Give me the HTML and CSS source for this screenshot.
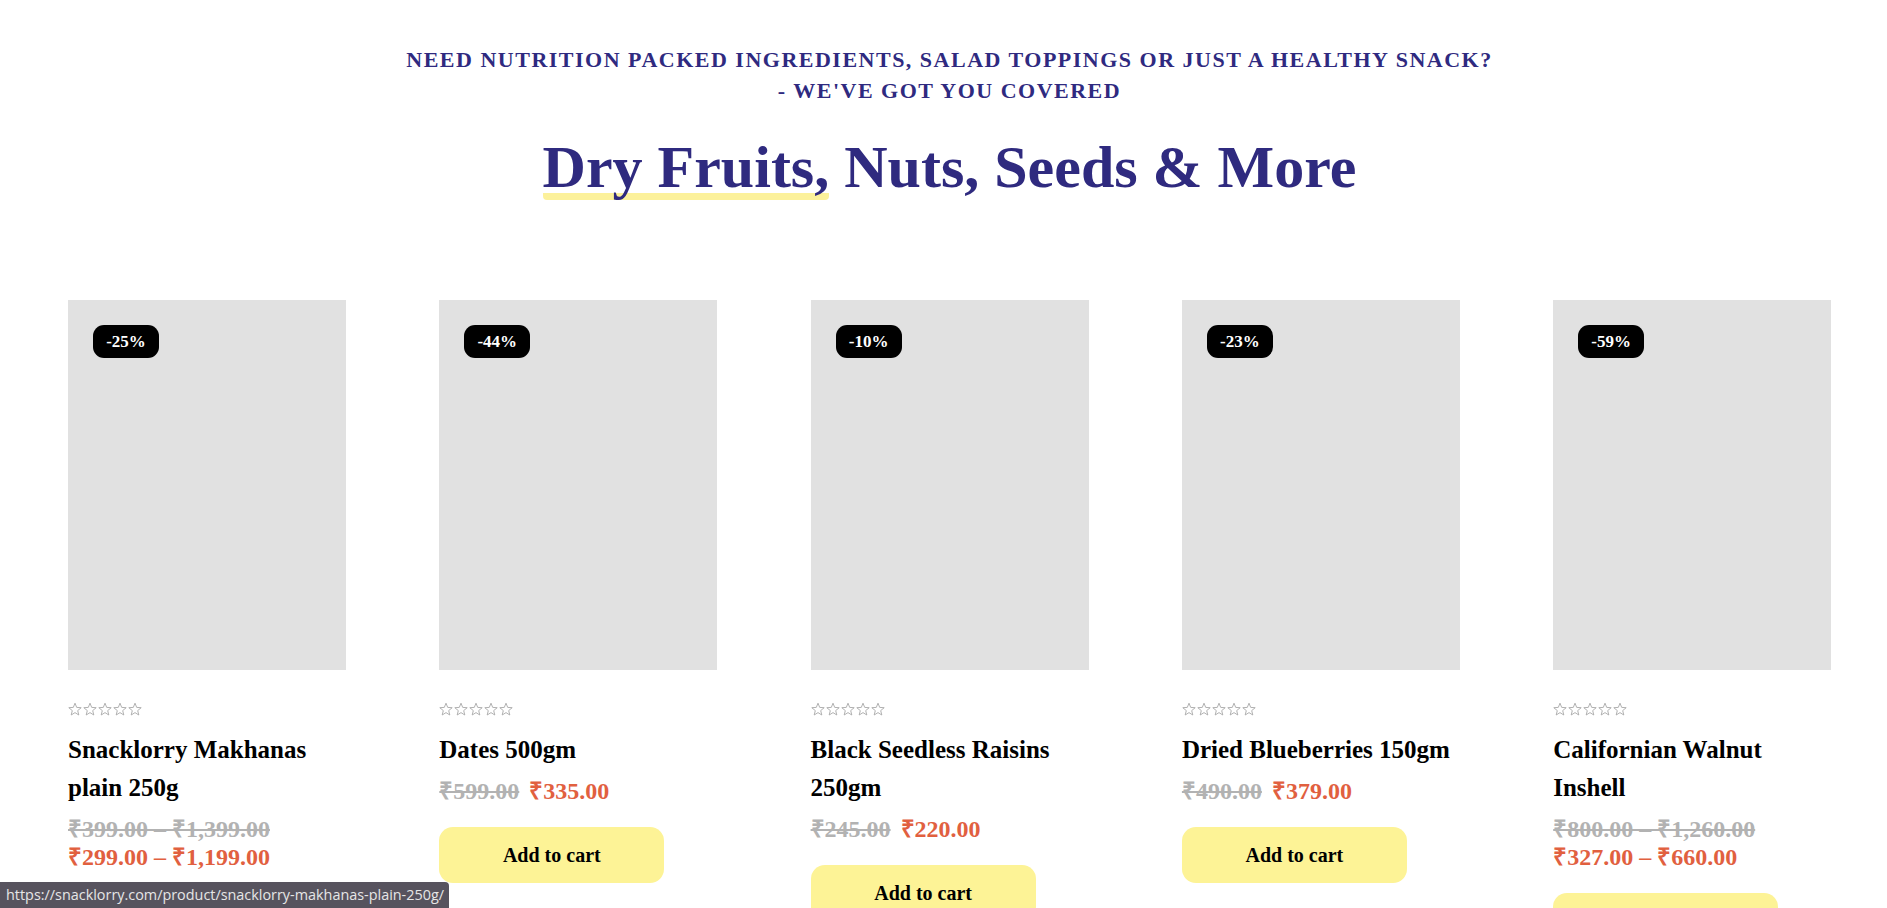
FILE: index.html
```html
<!DOCTYPE html>
<html lang="en">
<head>
<meta charset="utf-8">
<title>Dry Fruits, Nuts, Seeds &amp; More</title>
<link rel="stylesheet" href="styles.css">
</head>
<body>
<section class="intro">
  <p class="tagline">Need nutrition packed ingredients, salad toppings or just a healthy snack?<br>- We've got you covered</p>
  <h2 class="title"><span class="mark">Dry Fruits,</span> Nuts, Seeds &amp; More</h2>
</section>

<ul class="products">
  <li class="card">
    <a class="thumb" href="#"><span class="badge">-25%</span></a>
    <div class="stars">
      <svg viewBox="0 0 75 14"><g fill="none" stroke="#a8a8a8" stroke-width="0.9"><path id="s" d="M7 1.2l1.7 4.2 4.5.3-3.5 2.9 1.1 4.4L7 10.6 3.2 13l1.1-4.4L.8 5.7l4.5-.3z"/><use href="#s" x="15"/><use href="#s" x="30"/><use href="#s" x="45"/><use href="#s" x="60"/></g></svg>
    </div>
    <h3 class="name">Snacklorry Makhanas plain 250g</h3>
    <div class="price range">
      <del>₹399.00 – ₹1,399.00</del>
      <ins>₹299.00 – ₹1,199.00</ins>
    </div>
    <a class="cart" href="#">Add to cart</a>
  </li>
  <li class="card">
    <a class="thumb" href="#"><span class="badge">-44%</span></a>
    <div class="stars">
      <svg viewBox="0 0 75 14"><g fill="none" stroke="#a8a8a8" stroke-width="0.9"><use href="#s"/><use href="#s" x="15"/><use href="#s" x="30"/><use href="#s" x="45"/><use href="#s" x="60"/></g></svg>
    </div>
    <h3 class="name">Dates 500gm</h3>
    <div class="price"><del>₹599.00</del> <ins>₹335.00</ins></div>
    <a class="cart" href="#">Add to cart</a>
  </li>
  <li class="card">
    <a class="thumb" href="#"><span class="badge">-10%</span></a>
    <div class="stars">
      <svg viewBox="0 0 75 14"><g fill="none" stroke="#a8a8a8" stroke-width="0.9"><use href="#s"/><use href="#s" x="15"/><use href="#s" x="30"/><use href="#s" x="45"/><use href="#s" x="60"/></g></svg>
    </div>
    <h3 class="name">Black Seedless Raisins 250gm</h3>
    <div class="price"><del>₹245.00</del> <ins>₹220.00</ins></div>
    <a class="cart" href="#">Add to cart</a>
  </li>
  <li class="card">
    <a class="thumb" href="#"><span class="badge">-23%</span></a>
    <div class="stars">
      <svg viewBox="0 0 75 14"><g fill="none" stroke="#a8a8a8" stroke-width="0.9"><use href="#s"/><use href="#s" x="15"/><use href="#s" x="30"/><use href="#s" x="45"/><use href="#s" x="60"/></g></svg>
    </div>
    <h3 class="name">Dried Blueberries 150gm</h3>
    <div class="price"><del>₹490.00</del> <ins>₹379.00</ins></div>
    <a class="cart" href="#">Add to cart</a>
  </li>
  <li class="card">
    <a class="thumb" href="#"><span class="badge">-59%</span></a>
    <div class="stars">
      <svg viewBox="0 0 75 14"><g fill="none" stroke="#a8a8a8" stroke-width="0.9"><use href="#s"/><use href="#s" x="15"/><use href="#s" x="30"/><use href="#s" x="45"/><use href="#s" x="60"/></g></svg>
    </div>
    <h3 class="name">Californian Walnut Inshell</h3>
    <div class="price range">
      <del>₹800.00 – ₹1,260.00</del>
      <ins>₹327.00 – ₹660.00</ins>
    </div>
    <a class="cart" href="#">Add to cart</a>
  </li>
</ul>

<div class="status">https://snacklorry.com/product/snacklorry-makhanas-plain-250g/</div>
</body>
</html>
```

FILE: styles.css
```css
html {
  overflow: hidden;
}

body {
  margin: 0;
  background: #ffffff;
  font-family: "Liberation Serif", "Times New Roman", serif;
  color: #000;
}

.intro {
  padding: 44px 0 0 12px;
  text-align: center;
}

.tagline {
  margin: 0;
  font-size: 22px;
  line-height: 31px;
  font-weight: 700;
  letter-spacing: 1.5px;
  text-transform: uppercase;
  color: #2f2a80;
}

.title {
  margin: 25px 0 0;
  font-size: 60px;
  line-height: 72px;
  font-weight: 700;
  color: #2f2a7f;
}

.mark {
  background-image: linear-gradient(#fcf19b, #fcf19b);
  background-repeat: no-repeat;
  background-size: 100% 7px;
  background-position: 0 59px;
  border-radius: 4px;
}

.products {
  list-style: none;
  margin: 97px 0 0;
  padding: 0 0 0 68px;
  display: grid;
  grid-template-columns: repeat(5, 278px);
  column-gap: 93.3px;
  align-items: start;
}

.card {
  display: flex;
  flex-direction: column;
  align-items: flex-start;
}

.thumb {
  position: relative;
  display: block;
  width: 278px;
  height: 370px;
  background: #e1e1e1;
}

.badge {
  position: absolute;
  top: 25px;
  left: 25px;
  width: 66px;
  height: 33px;
  border-radius: 11px;
  background: #000;
  color: #fff;
  font-size: 17px;
  font-weight: 700;
  line-height: 33px;
  text-align: center;
}

.stars {
  margin-top: 32px;
  height: 14px;
}

.stars svg {
  display: block;
  width: 75px;
  height: 14px;
}

.name {
  margin: 15px 0 0;
  font-size: 25px;
  line-height: 38px;
  font-weight: 700;
}

.price {
  margin-top: 8px;
  font-size: 24px;
  line-height: 28px;
  font-weight: 700;
}

.price del {
  color: #b2b2b2;
}

.price ins {
  text-decoration: none;
  color: #e1603f;
  margin-left: 4px;
}

.price.range del,
.price.range ins {
  display: block;
  margin-left: 0;
}

.cart {
  margin-top: 22px;
  width: 225px;
  height: 56px;
  border-radius: 14px;
  background: #fdf396;
  color: #000;
  font-size: 20px;
  font-weight: 700;
  line-height: 56px;
  text-align: center;
  text-decoration: none;
}

.status {
  position: fixed;
  left: 0;
  bottom: 0;
  width: 443px;
  height: 26px;
  padding-left: 6px;
  background: #57535e;
  border-top-right-radius: 4px;
  color: #e6e6e6;
  font-family: "Open Sans", "Noto Sans", sans-serif;
  font-size: 14.4px;
  line-height: 26px;
  white-space: nowrap;
}
```
